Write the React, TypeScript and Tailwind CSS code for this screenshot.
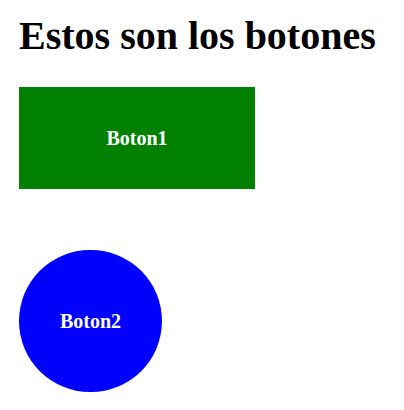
import React from 'react';

const App: React.FC = () => {
  return (
    <div className="min-h-[410px] bg-white pl-[19px] pt-[13px] flex flex-col items-start" style={{ fontFamily: '"Liberation Serif", "Times New Roman", serif' }}>
      <h1 className="text-[40px] leading-[46px] font-bold text-black">Estos son los botones</h1>

      {/* Boton1: green rectangle */}
      <button className="mt-[28px] w-[236px] h-[102px] bg-[#008000] text-white text-[20px] font-bold flex items-center justify-center">
        Boton1
      </button>

      {/* Boton2: blue circle */}
      <button className="mt-[61px] w-[143px] h-[142px] rounded-full bg-[#0000ff] text-white text-[20px] font-bold flex items-center justify-center">
        Boton2
      </button>
    </div>
  );
};

export default App;
